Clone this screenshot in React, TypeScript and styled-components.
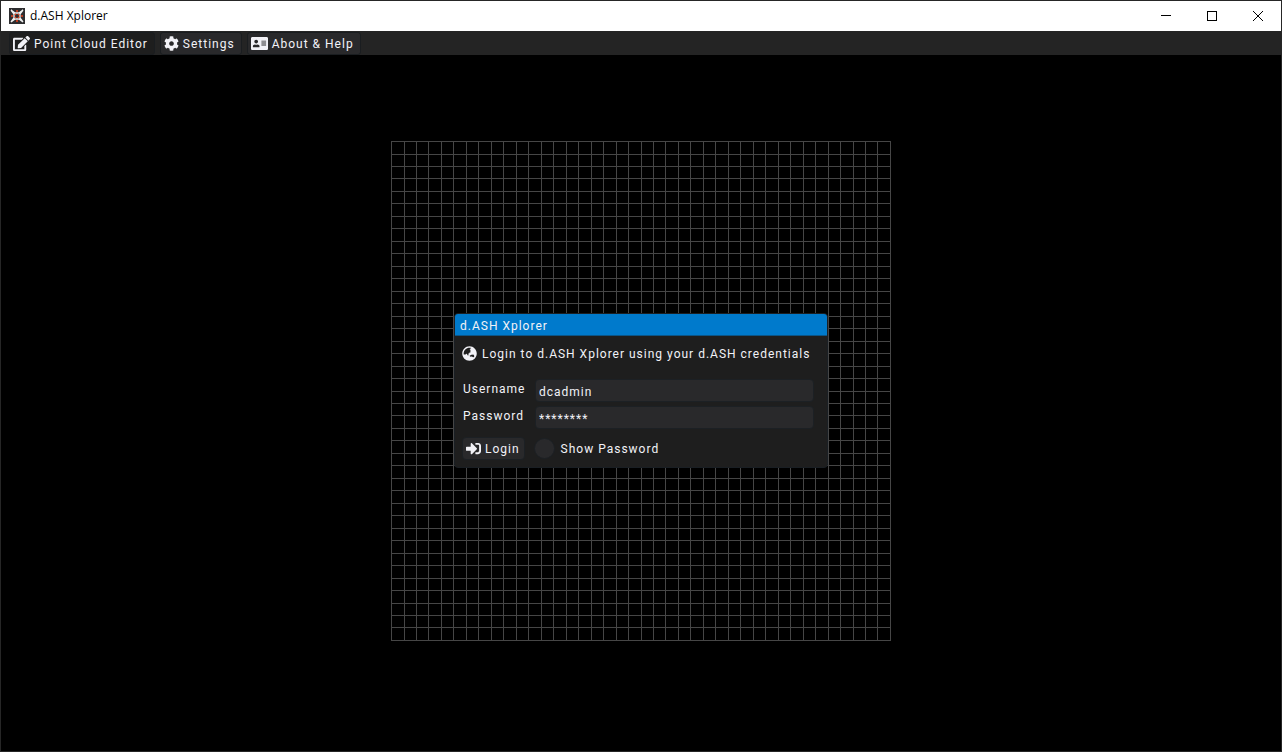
import React, { useState } from "react";
import styled, { createGlobalStyle } from "styled-components";
import { FaEdit, FaCog, FaAddressCard, FaSignInAlt, FaGlobeAsia } from "react-icons/fa";

const GlobalStyle = createGlobalStyle`
  * { box-sizing: border-box; }
  body { margin: 0; background: #000; }
  button, input { font: inherit; letter-spacing: inherit; color: inherit; }
`;

const Window = styled.div`
  display: flex;
  flex-direction: column;
  min-height: 100vh;
  border: 1px solid #262626;
  background: #000;
  color: #f2f2f7;
  font: 12px/16px Roboto, "Liberation Sans", sans-serif;
  letter-spacing: 1px;
`;

const TitleBar = styled.header`
  display: flex;
  align-items: center;
  height: 30px;
  padding-left: 8px;
  background: #fff;
  color: #000;
  letter-spacing: normal;
`;

const AppTitle = styled.h1`
  flex: 1;
  margin: 0 0 0 5px;
  font: 400 12px/16px "Open Sans", "Noto Sans", sans-serif;
`;

const CaptionButton = styled.button`
  display: grid;
  place-items: center;
  width: 46px;
  height: 28px;
  padding: 0;
  border: 0;
  background: none;
`;

const MenuBar = styled.nav`
  display: flex;
  gap: 5px;
  height: 24px;
  padding: 1px 8px 0;
  background: #242424;
`;

const MenuItem = styled.button<{ $active?: boolean }>`
  display: flex;
  align-items: center;
  gap: 4px;
  height: 23px;
  padding: 0 6px 0 3px;
  border: 1px solid #1a1d20;
  border-radius: 3px;
  background: ${(p) => (p.$active ? "#1e1e1e" : "#29292b")};
  white-space: nowrap;
`;

const Scene = styled.main`
  flex: 1;
  display: grid;
  place-items: center;
  padding-bottom: 24px;
  > * { grid-area: 1 / 1; }
`;

const Dialog = styled.form`
  position: relative;
  display: flex;
  flex-direction: column;
  min-width: 374px;
  margin-bottom: 2px;
  border: 1px solid #1a1f24;
  border-radius: 4px;
  background: #1e1e1e;
  white-space: nowrap;
`;

const DialogTitle = styled.h2`
  height: 22px;
  margin: 0;
  padding: 4px 5px 0;
  border-bottom: 1px solid #0b5587;
  border-radius: 3px 3px 0 0;
  background: #007acc;
  font: inherit;
`;

const DialogBody = styled.div`
  display: flex;
  flex-direction: column;
  padding: 10px 7px 7px;
`;

const Intro = styled.p`
  display: flex;
  align-items: center;
  gap: 5px;
  margin: 0 0 17px;
`;

const Field = styled.div`
  display: flex;
  gap: 8px;
  margin-bottom: 4px;
  padding-right: 6px;
`;

const FieldLabel = styled.label`
  min-width: 65px;
  padding-left: 1px;
  line-height: 20px;
`;

const TextInput = styled.input`
  flex: 1;
  min-width: 0;
  height: 23px;
  padding: 3px 3px 0;
  border: 1px solid #1c2024;
  border-radius: 4px;
  background: #29292b;
  outline: 0;
`;

const Actions = styled.div`
  display: flex;
  align-items: center;
  gap: 9px;
  margin-top: 4px;
`;

const LoginButton = styled.button`
  display: flex;
  align-items: center;
  gap: 4px;
  height: 23px;
  padding: 0 4px 0 3px;
  border: 1px solid #1c2024;
  border-radius: 4px;
  background: #29292b;
`;

const Toggle = styled.label`
  display: flex;
  align-items: center;
  gap: 6px;
`;

const Caption = styled.span`
  padding-top: 2px;
`;

const RoundCheck = styled.input`
  appearance: none;
  width: 21px;
  height: 21px;
  margin: 0;
  border: 1px solid #1c2024;
  border-radius: 50%;
  background: #29292b;
  &:checked { box-shadow: inset 0 0 0 5px #29292b; background: #007acc; }
`;

const CELLS = 40;
const lines = Array.from({ length: CELLS + 1 }, (_, i) => Math.round(0.06 + i * 12.472));
const gridPath = lines.map((p) => `M${p}.5 0V500M0 ${p}.5H500`).join("");

const FloorGrid = () => (
  <svg width="500" height="500" shapeRendering="crispEdges" aria-hidden="true">
    <path d={gridPath} stroke="#464646" fill="none" />
  </svg>
);

const Logo = () => (
  <svg width="16" height="16" viewBox="0 0 16 16" aria-hidden="true">
    <rect width="16" height="16" fill="#2d2d2f" />
    <path d="M2 2L6 5H10L14 2M2 14L6 11H10L14 14M2 2L5 6V10L2 14M14 2L11 6V10L14 14" stroke="#f0f0f0" strokeWidth="1.300" fill="none" />
    <path d="M8 2V4M8 12V14M2 8H4M12 8H14M6 6L7 7M10 6L9 7M6 10L7 9M10 10L9 9" stroke="#e8401c" strokeWidth="1.500" />
  </svg>
);

export default function App() {
  const [user, setUser] = useState("dcadmin");
  const [password, setPassword] = useState("********");
  const [show, setShow] = useState(false);
  return (
    <Window>
      <GlobalStyle />
      <TitleBar>
        <Logo />
        <AppTitle>d.ASH Xplorer</AppTitle>
        <CaptionButton aria-label="Minimize">
          <svg width="10" height="10" shapeRendering="crispEdges"><path d="M0 4.500H10" stroke="#000" /></svg>
        </CaptionButton>
        <CaptionButton aria-label="Maximize">
          <svg width="10" height="10" shapeRendering="crispEdges"><path d="M.5.5H9.500V9.500H.5Z" stroke="#000" fill="none" /></svg>
        </CaptionButton>
        <CaptionButton aria-label="Close">
          <svg width="10" height="10"><path d="M0 0L10 10M10 0L0 10" stroke="#000" /></svg>
        </CaptionButton>
      </TitleBar>
      <MenuBar>
        <MenuItem $active><FaEdit size={17} />Point Cloud Editor</MenuItem>
        <MenuItem><FaCog size={15} />Settings</MenuItem>
        <MenuItem><FaAddressCard size={17} />About &amp; Help</MenuItem>
      </MenuBar>
      <Scene>
        <FloorGrid />
        <Dialog onSubmit={(e) => e.preventDefault()}>
          <DialogTitle>d.ASH Xplorer</DialogTitle>
          <DialogBody>
            <Intro><FaGlobeAsia size={15} />Login to d.ASH Xplorer using your d.ASH credentials</Intro>
            <Field>
              <FieldLabel htmlFor="username">Username</FieldLabel>
              <TextInput id="username" value={user} onChange={(e) => setUser(e.target.value)} />
            </Field>
            <Field>
              <FieldLabel htmlFor="password">Password</FieldLabel>
              <TextInput id="password" value={password} onChange={(e) => setPassword(e.target.value)} />
            </Field>
            <Actions>
              <LoginButton type="submit"><FaSignInAlt size={15} /><Caption>Login</Caption></LoginButton>
              <Toggle>
                <RoundCheck type="checkbox" checked={show} onChange={(e) => setShow(e.target.checked)} />
                <Caption>Show Password</Caption>
              </Toggle>
            </Actions>
          </DialogBody>
        </Dialog>
      </Scene>
    </Window>
  );
}
